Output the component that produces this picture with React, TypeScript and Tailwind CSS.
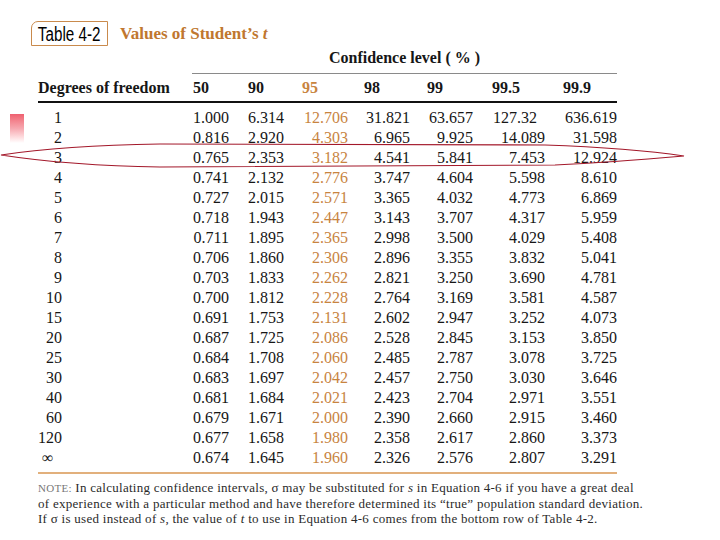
import React from "react"

const rows: [string, string[]][] = [
  ["1", ["1.000", "6.314", "12.706", "31.821", "63.657", "127.32", "636.619"]],
  ["2", ["0.816", "2.920", "4.303", "6.965", "9.925", "14.089", "31.598"]],
  ["3", ["0.765", "2.353", "3.182", "4.541", "5.841", "7.453", "12.924"]],
  ["4", ["0.741", "2.132", "2.776", "3.747", "4.604", "5.598", "8.610"]],
  ["5", ["0.727", "2.015", "2.571", "3.365", "4.032", "4.773", "6.869"]],
  ["6", ["0.718", "1.943", "2.447", "3.143", "3.707", "4.317", "5.959"]],
  ["7", ["0.711", "1.895", "2.365", "2.998", "3.500", "4.029", "5.408"]],
  ["8", ["0.706", "1.860", "2.306", "2.896", "3.355", "3.832", "5.041"]],
  ["9", ["0.703", "1.833", "2.262", "2.821", "3.250", "3.690", "4.781"]],
  ["10", ["0.700", "1.812", "2.228", "2.764", "3.169", "3.581", "4.587"]],
  ["15", ["0.691", "1.753", "2.131", "2.602", "2.947", "3.252", "4.073"]],
  ["20", ["0.687", "1.725", "2.086", "2.528", "2.845", "3.153", "3.850"]],
  ["25", ["0.684", "1.708", "2.060", "2.485", "2.787", "3.078", "3.725"]],
  ["30", ["0.683", "1.697", "2.042", "2.457", "2.750", "3.030", "3.646"]],
  ["40", ["0.681", "1.684", "2.021", "2.423", "2.704", "2.971", "3.551"]],
  ["60", ["0.679", "1.671", "2.000", "2.390", "2.660", "2.915", "3.460"]],
  ["120", ["0.677", "1.658", "1.980", "2.358", "2.617", "2.860", "3.373"]],
  ["∞", ["0.674", "1.645", "1.960", "2.326", "2.576", "2.807", "3.291"]],
]

const headers = ["50", "90", "95", "98", "99", "99.5", "99.9"]

// inner width of each numeric column (values are right aligned inside it)
const inner = ["w-[36px]", "w-[36px]", "w-[46px]", "w-[46px]", "w-[46px]", "w-[53px]", "w-[54px]"]

const grid = "grid grid-cols-[155px_55px_54px_62px_63px_65px_71px_54px]"

function Cell({ i, v }: { i: number; v: string }) {
  const orange = i === 2
  return (
    <div>
      <span className={`inline-block text-right ${inner[i]} ${orange ? "text-[#c8843f]" : ""} ${v === "127.32" ? "pr-[8px]" : ""}`}>{v}</span>
    </div>
  )
}

export default function App() {
  return (
    <div className="relative w-[720px] h-[540px] overflow-hidden bg-white text-[#161616] font-['Liberation_Serif',serif]">
      <div className="pl-[31px] pt-[21px] flex items-center">
        <div className="h-[25px] w-[77px] border-[1.5px] border-[#c98a4c] rounded-tl-[7px] flex items-center justify-center overflow-hidden">
          <span className="inline-block whitespace-nowrap text-[20px] leading-none text-black font-['Liberation_Sans',sans-serif] scale-x-[0.76]">
            Table 4-2
          </span>
        </div>
        <div className="ml-[12px] text-[17px] font-bold text-[#c0772f] leading-none">
          Values of Student’s <i>t</i>
        </div>
      </div>

      <div className="pl-[38px]">
        <div className="ml-[154px] w-[425px] mt-[2px]">
          <div className="text-center text-[16px] font-bold leading-[20px]">Confidence level ( % )</div>
          <div className="mt-[5px] h-px bg-[#8a8a8a]" />
        </div>

        <div className={`${grid} text-[16px] font-bold h-[27px] items-center`}>
          <div>Degrees of freedom</div>
          {headers.map((h, i) => (
            <div key={h} className={i === 2 ? "text-[#c8843f]" : ""}>{h}</div>
          ))}
        </div>
        <div className="w-[579px] h-[2px] bg-[#111]" />

        <div className="pt-[5px] text-[16px] leading-[20px]">
          {rows.map(([df, vals]) => (
            <div key={df} className={grid}>
              <div>
                {df === "∞" ? (
                  <span className="inline-block pl-[4px]">∞</span>
                ) : (
                  <span className="inline-block w-[24px] text-right">{df}</span>
                )}
              </div>
              {vals.map((v, i) => (
                <Cell key={i} i={i} v={v} />
              ))}
            </div>
          ))}
        </div>

        <div className="mt-[4px] w-[579px] h-[2px] bg-[#e2b07c]" />

        <div className="mt-[6px] text-[13px] leading-[15px] tracking-[0.28px] text-[#2a2a2a] whitespace-nowrap">
          <div>
            <span className="text-[#777] text-[11px] tracking-wide">NOTE:</span> In calculating confidence intervals, σ may be substituted for <i>s</i> in Equation 4-6 if you have a great deal
          </div>
          <div>of experience with a particular method and have therefore determined its “true” population standard deviation.</div>
          <div>
            If σ is used instead of <i>s</i>, the value of <i>t</i> to use in Equation 4-6 comes from the bottom row of Table 4-2.
          </div>
        </div>
      </div>

      <div className="absolute left-[10px] top-[114px] w-[14px] h-[29px] bg-gradient-to-b from-[#ee6070] via-[#f6a8b0] to-white" />

      <svg className="absolute left-0 top-0 pointer-events-none" width="720" height="540" viewBox="0 0 720 540">
        <path
          d="M1 155 C 40 149 90 145 160 144 L 545 145 C 600 147 650 151 684 156 C 650 159 600 163 555 165 L 160 167 C 90 166 40 161 1 155 Z"
          fill="none"
          stroke="#a3182a"
          strokeWidth="1.2"
        />
      </svg>
    </div>
  )
}
